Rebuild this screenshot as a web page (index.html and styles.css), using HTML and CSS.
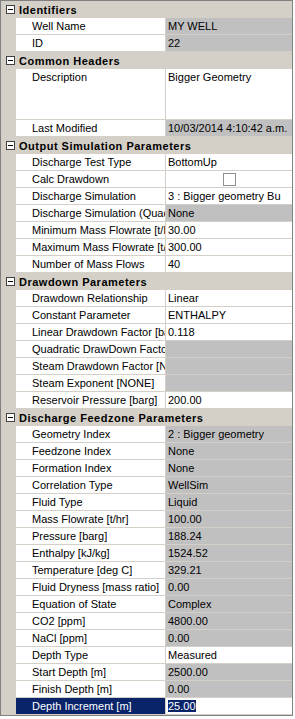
FILE: index.html
```
<!DOCTYPE html>
<html lang="en">
<head>
    <meta charset="utf-8">
    <title>Well Properties</title>
    <link rel="stylesheet" href="styles.css">
</head>
<body>
    <div class="grid">
        <div class="cat"><span class="minus"></span>Identifiers</div>
        <div class="prop"><div class="name">Well Name</div><div class="val ro">MY WELL</div></div>
        <div class="prop"><div class="name">ID</div><div class="val ro">22</div></div>

        <div class="cat"><span class="minus"></span>Common Headers</div>
        <div class="prop tall"><div class="name">Description</div><div class="val">Bigger Geometry</div></div>
        <div class="prop"><div class="name">Last Modified</div><div class="val ro">10/03/2014 4:10:42 a.m.</div></div>

        <div class="cat"><span class="minus"></span>Output Simulation Parameters</div>
        <div class="prop"><div class="name">Discharge Test Type</div><div class="val">BottomUp</div></div>
        <div class="prop"><div class="name">Calc Drawdown</div><div class="val check"><span class="box"></span></div></div>
        <div class="prop"><div class="name">Discharge Simulation</div><div class="val">3 : Bigger geometry Bu</div></div>
        <div class="prop"><div class="name">Discharge Simulation (Quad</div><div class="val ro">None</div></div>
        <div class="prop"><div class="name">Minimum Mass Flowrate [t/hr]</div><div class="val">30.00</div></div>
        <div class="prop"><div class="name">Maximum Mass Flowrate [t/hr]</div><div class="val">300.00</div></div>
        <div class="prop"><div class="name">Number of Mass Flows</div><div class="val">40</div></div>

        <div class="cat"><span class="minus"></span>Drawdown Parameters</div>
        <div class="prop"><div class="name">Drawdown Relationship</div><div class="val">Linear</div></div>
        <div class="prop"><div class="name">Constant Parameter</div><div class="val">ENTHALPY</div></div>
        <div class="prop"><div class="name">Linear Drawdown Factor [barg]</div><div class="val">0.118</div></div>
        <div class="prop"><div class="name">Quadratic DrawDown Factor</div><div class="val ro"></div></div>
        <div class="prop"><div class="name">Steam Drawdown Factor [NONE]</div><div class="val ro"></div></div>
        <div class="prop"><div class="name">Steam Exponent [NONE]</div><div class="val ro"></div></div>
        <div class="prop"><div class="name">Reservoir Pressure [barg]</div><div class="val">200.00</div></div>

        <div class="cat"><span class="minus"></span>Discharge Feedzone Parameters</div>
        <div class="prop"><div class="name">Geometry Index</div><div class="val ro">2 : Bigger geometry</div></div>
        <div class="prop"><div class="name">Feedzone Index</div><div class="val ro">None</div></div>
        <div class="prop"><div class="name">Formation Index</div><div class="val ro">None</div></div>
        <div class="prop"><div class="name">Correlation Type</div><div class="val ro">WellSim</div></div>
        <div class="prop"><div class="name">Fluid Type</div><div class="val ro">Liquid</div></div>
        <div class="prop"><div class="name">Mass Flowrate [t/hr]</div><div class="val ro">100.00</div></div>
        <div class="prop"><div class="name">Pressure [barg]</div><div class="val ro">188.24</div></div>
        <div class="prop"><div class="name">Enthalpy [kJ/kg]</div><div class="val ro">1524.52</div></div>
        <div class="prop"><div class="name">Temperature [deg C]</div><div class="val ro">329.21</div></div>
        <div class="prop"><div class="name">Fluid Dryness [mass ratio]</div><div class="val ro">0.00</div></div>
        <div class="prop"><div class="name">Equation of State</div><div class="val ro">Complex</div></div>
        <div class="prop"><div class="name">CO2 [ppm]</div><div class="val ro">4800.00</div></div>
        <div class="prop"><div class="name">NaCl [ppm]</div><div class="val ro">0.00</div></div>
        <div class="prop"><div class="name">Depth Type</div><div class="val">Measured</div></div>
        <div class="prop"><div class="name">Start Depth [m]</div><div class="val ro">2500.00</div></div>
        <div class="prop"><div class="name">Finish Depth [m]</div><div class="val ro">0.00</div></div>
        <div class="prop selected"><div class="name">Depth Increment [m]</div><div class="val"><span class="sel">25.00</span></div></div>
    </div>
</body>
</html>
```
FILE: styles.css
```
body {
    margin: 0;
    background: #fff;
    font: 11px/16px "Liberation Sans", Arial, sans-serif;
    color: #000;
}

.grid {
    width: 291px;
    border: 1px solid #808080;
    background: #d4d0c8;
}

/* category header */
.cat {
    display: flex;
    align-items: center;
    height: 17px;
    padding-left: 5px;
    font-weight: bold;
    letter-spacing: 0.5px;
    white-space: nowrap;
    overflow: hidden;
}

.minus {
    position: relative;
    flex: none;
    width: 7px;
    height: 7px;
    margin-right: 4px;
    border: 1px solid #404040;
    background: #fff;
}
.minus::after {
    content: "";
    position: absolute;
    left: 1px;
    top: 3px;
    width: 5px;
    height: 1px;
    background: #000;
}

/* property rows */
.prop {
    display: flex;
    height: 16px;
    margin-left: 15px;
    border-bottom: 1px solid #d4d0c8;
}
.prop.tall {
    height: 50px;
}

.name {
    width: 133px;
    flex: none;
    padding-left: 16px;
    background: #fff;
    border-right: 1px solid #d4d0c8;
    white-space: nowrap;
    overflow: hidden;
}

.val {
    flex: 1;
    padding-left: 2px;
    background: #fff;
    white-space: nowrap;
    overflow: hidden;
}
.val.ro {
    background: #c0c0c0;
}

.check {
    display: flex;
    justify-content: center;
    align-items: center;
    padding-left: 0;
}
.box {
    width: 11px;
    height: 11px;
    border: 1px solid #8f8f8f;
    background: #fff;
}

.selected .name {
    background: #0a246a;
    color: #fff;
}
.sel {
    background: #0a246a;
    color: #fff;
}
```
